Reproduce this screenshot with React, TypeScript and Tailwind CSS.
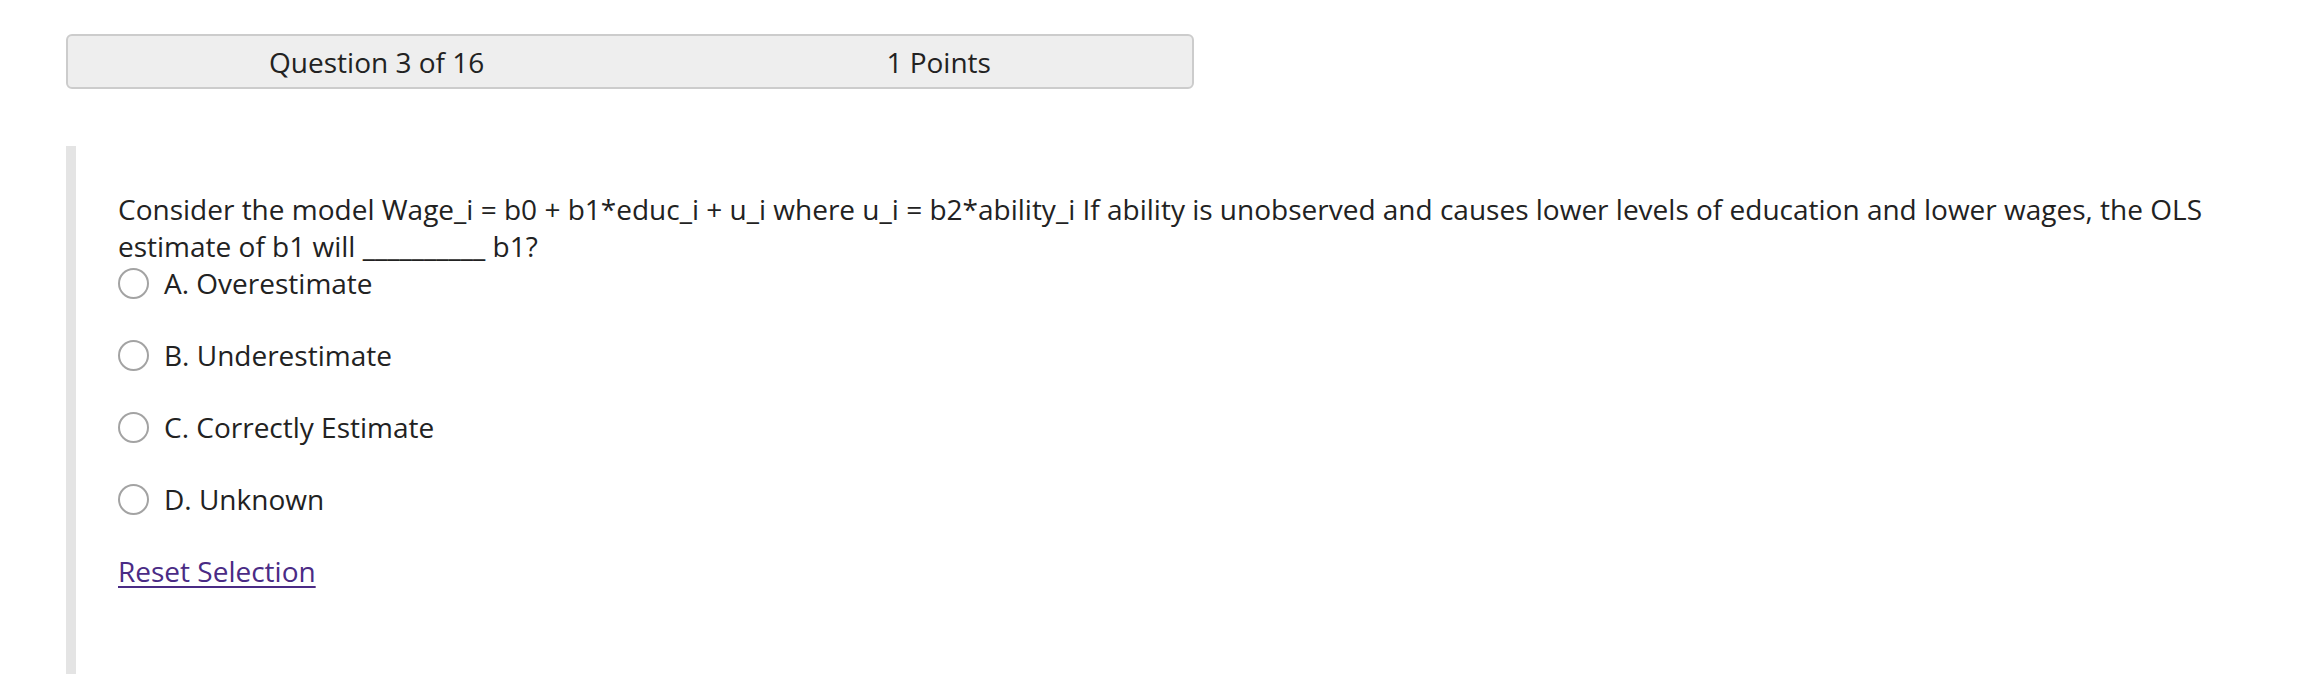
import React, { useState } from 'react';

const options = [
  { id: 'A', label: 'A. Overestimate' },
  { id: 'B', label: 'B. Underestimate' },
  { id: 'C', label: 'C. Correctly Estimate' },
  { id: 'D', label: 'D. Unknown' },
];

export default function App() {
  const [selected, setSelected] = useState<string | null>(null);

  return (
    <div
      className="min-h-screen bg-white pt-[34px] pl-[66px] pr-[72px] text-[#222222]"
      style={{ fontFamily: '"Open Sans", "Noto Sans", Arial, sans-serif' }}
    >
      {/* Header */}
      <div className="flex h-[55px] w-[1128px] items-center justify-around rounded-[6px] border-2 border-[#cccccc] bg-[#eeeeee] text-[28px] leading-none">
        <span>Question 3 of 16</span>
        <span>1 Points</span>
      </div>

      {/* Question body */}
      <div className="mt-[57px] border-l-[10px] border-[#e4e4e4] pl-[42px] pt-[45px] pb-[100px] text-[28px] leading-[37px]">
        <p>
          Consider the model Wage_i = b0 + b1*educ_i + u_i where u_i = b2*ability_i If ability is
          unobserved and causes lower levels of education and lower wages, the OLS estimate of b1
          will __________ b1?
        </p>

        <div className="flex flex-col gap-[35px]">
          {options.map((o) => (
            <label key={o.id} className="flex h-[37px] cursor-pointer items-center gap-[15px]">
              <span
                onClick={() => setSelected(o.id)}
                className={`flex h-[31px] w-[31px] items-center justify-center rounded-full border-2 ${
                  selected === o.id ? 'border-[#4a2b85]' : 'border-[#a3a3a3]'
                } bg-white`}
              >
                {selected === o.id && <span className="h-[15px] w-[15px] rounded-full bg-[#4a2b85]" />}
              </span>
              <span onClick={() => setSelected(o.id)}>{o.label}</span>
            </label>
          ))}

          <div>
            <a
              href="#"
              onClick={(e) => {
                e.preventDefault();
                setSelected(null);
              }}
              className="text-[#4a2b85] underline underline-offset-[4px]"
            >
              Reset Selection
            </a>
          </div>
        </div>
      </div>
    </div>
  );
}
